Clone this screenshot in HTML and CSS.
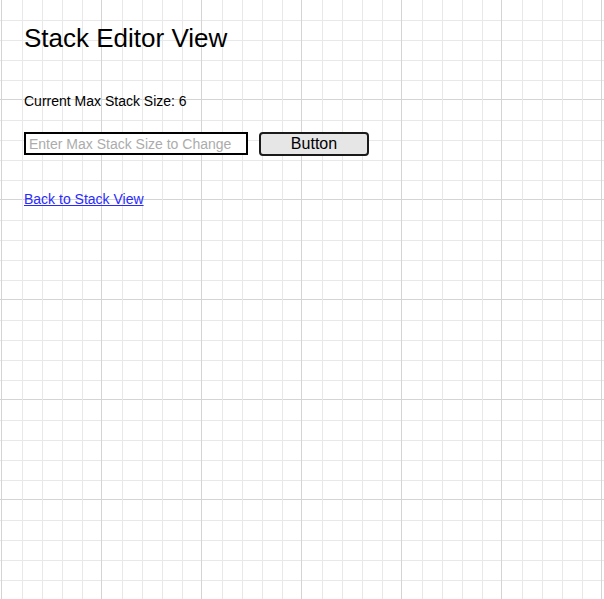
FILE: index.html
```html
<!DOCTYPE html>
<html>
<head>
<meta charset="utf-8">
<link rel="stylesheet" href="styles.css">
</head>
<body>
<main class="page">
  <h1 class="title">Stack Editor View</h1>
  <p class="current">Current Max Stack Size: 6</p>
  <div class="row">
    <input class="size-input" type="text" placeholder="Enter Max Stack Size to Change">
    <button class="btn" type="button">Button</button>
  </div>
  <a class="back" href="#">Back to Stack View</a>
</main>
</body>
</html>
```
FILE: styles.css
```css
html {
  background-color: #fff;
  background-image:
    linear-gradient(to right,
      #d4d4d4 0, #d4d4d4 1px, transparent 1px, transparent 21px,
      #e8e8e8 21px, #e8e8e8 22px, transparent 22px, transparent 41px,
      #e8e8e8 41px, #e8e8e8 42px, transparent 42px, transparent 61px,
      #e8e8e8 61px, #e8e8e8 62px, transparent 62px, transparent 81px,
      #e8e8e8 81px, #e8e8e8 82px, transparent 82px),
    linear-gradient(to bottom,
      #d4d4d4 0, #d4d4d4 1px, transparent 1px, transparent 21px,
      #e8e8e8 21px, #e8e8e8 22px, transparent 22px, transparent 41px,
      #e8e8e8 41px, #e8e8e8 42px, transparent 42px, transparent 61px,
      #e8e8e8 61px, #e8e8e8 62px, transparent 62px, transparent 81px,
      #e8e8e8 81px, #e8e8e8 82px, transparent 82px);
  background-size: 100px 100px, 100px 100px;
  background-position: 1px 0, 0 99px;
  min-height: 100%;
}
body {
  margin: 0;
  font-family: "Liberation Sans", Arial, sans-serif;
  color: #000;
}
.page {
  display: flex;
  flex-direction: column;
  align-items: flex-start;
  padding: 23px 24px;
}
.title {
  margin: 0;
  font-size: 26px;
  font-weight: normal;
  line-height: 30px;
}
.current {
  margin: 40px 0 0;
  font-size: 14px;
  line-height: 16px;
}
.row {
  display: flex;
  align-items: center;
  gap: 11px;
  margin-top: 22px;
  height: 25px;
}
.size-input {
  box-sizing: border-box;
  width: 224px;
  height: 23px;
  margin: 0;
  border: 2px solid #000;
  padding: 0 3px;
  font-family: "Liberation Sans", Arial, sans-serif;
  font-size: 14px;
  background: #fff;
  outline: none;
}
.size-input::placeholder {
  color: #acacac;
}
.btn {
  box-sizing: border-box;
  width: 110px;
  height: 24px;
  margin: 0;
  border: 2px solid #1a1a1a;
  border-radius: 4px;
  background: #e6e6e6;
  font-family: "Liberation Sans", Arial, sans-serif;
  font-size: 16px;
  color: #000;
  padding: 0;
}
.back {
  margin-top: 35px;
  font-size: 14px;
  line-height: 16px;
  color: #2a2aff;
  text-decoration: underline;
}
```
